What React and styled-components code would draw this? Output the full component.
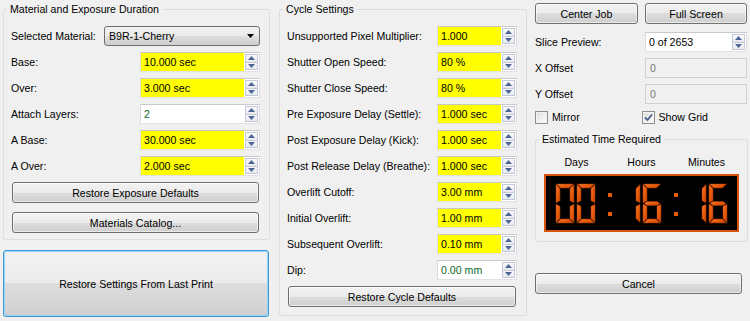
import React from 'react';
import styled, { createGlobalStyle } from 'styled-components';

const GlobalStyle = createGlobalStyle`
  html, body {
    margin: 0;
    padding: 0;
    background: #f0f0f0;
  }
  body {
    font-family: 'Liberation Sans', Arial, sans-serif;
    font-size: 10.6px;
    color: #000;
  }
`;

const Page = styled.div`
  width: 750px;
  height: 321px;
  box-sizing: border-box;
  padding: 3px 0 0 3px;
  display: flex;
  align-items: flex-start;
  background: #f0f0f0;
  overflow: hidden;
`;

const LeftColumn = styled.div`
  width: 267px;
  display: flex;
  flex-direction: column;
  gap: 10px;
  margin-right: 9px;
`;

const RightColumn = styled.div`
  width: 213px;
  margin-left: 8px;
  display: flex;
  flex-direction: column;
`;

const Group = styled.fieldset`
  margin: 0;
  min-width: 0;
  width: ${p => p.$w}px;
  box-sizing: border-box;
  padding: ${p => p.$pad};
  border: 1px solid #d5dfe5;
  border-radius: 3px;
`;

const Legend = styled.legend`
  padding: 0 3px;
  margin-left: ${p => p.$shift}px;
  line-height: 13px;
`;

const Stack = styled.div`
  display: flex;
  flex-direction: column;
  gap: 6px;
`;

const Row = styled.div`
  height: 20px;
  display: flex;
  align-items: center;
  justify-content: space-between;
`;

const Label = styled.span`
  white-space: nowrap;
`;

const Combo = styled.div`
  width: 156px;
  height: 20px;
  box-sizing: border-box;
  border: 1px solid #707070;
  border-radius: 3px;
  background: linear-gradient(#f2f2f2 0%, #ebebeb 50%, #dddddd 50%, #cfcfcf 100%);
  display: flex;
  align-items: center;
  justify-content: space-between;
  padding: 0 5px 0 4px;
`;

const SpinBox = styled.div`
  width: ${p => p.$w}px;
  height: 20px;
  box-sizing: border-box;
  display: flex;
  border: 1px solid;
  border-color: #c9c9c9 #dcdcdc #e2e2e2 #dcdcdc;
  background: #fff;
`;

const SpinValue = styled.div`
  flex: 1;
  display: flex;
  align-items: center;
  padding-left: 3px;
  background: ${p => (p.$hl ? '#ffff00' : '#ffffff')};
  color: ${p => (p.$green ? '#0d6a2a' : '#000')};
`;

const Spinner = styled.div`
  width: 15px;
  display: flex;
  flex-direction: column;
  padding: 1px;
  box-sizing: border-box;
  background: #fff;
`;

const SpinButton = styled.div`
  flex: 1;
  display: flex;
  align-items: center;
  justify-content: center;
  border: 1px solid #c2c9d8;
  background: linear-gradient(#fbfbfb, #e6e8ec);
  & + & {
    margin-top: -1px;
  }
`;

const Button = styled.div`
  height: 21px;
  width: ${p => (p.$w ? `${p.$w}px` : 'auto')};
  box-sizing: border-box;
  margin: ${p => p.$margin || '0'};
  border: 1px solid #707070;
  border-radius: 3px;
  background: linear-gradient(#f2f2f2 0%, #ebebeb 50%, #dddddd 50%, #cfcfcf 100%);
  box-shadow: inset 0 0 0 1px rgba(255, 255, 255, 0.55);
  display: flex;
  align-items: center;
  justify-content: center;
  white-space: nowrap;
`;

const BigButton = styled(Button)`
  height: 67px;
  width: 266px;
  border-color: #3c9ad8;
  box-shadow: inset 0 0 0 1px #9ad4f2;
  background: linear-gradient(#f2f2f2 0%, #ebebeb 50%, #dddddd 50%, #cfcfcf 100%);
`;

const ButtonPair = styled.div`
  display: flex;
  justify-content: space-between;
  height: 21px;
  margin-right: 1px;
`;

const FieldRow = styled.div`
  height: 20px;
  display: flex;
  align-items: center;
  justify-content: space-between;
  margin-top: ${p => p.$top}px;
  margin-right: 1px;
`;

const DisabledBox = styled.div`
  width: 102px;
  height: 20px;
  box-sizing: border-box;
  border: 1px solid #cfcfcf;
  background: #f0f0f0;
  color: #7a7a7a;
  display: flex;
  align-items: center;
  padding-left: 4px;
`;

const CheckRow = styled.div`
  height: 16px;
  margin-top: 5px;
  display: flex;
  align-items: center;
`;

const CheckItem = styled.label`
  width: 111px;
  display: flex;
  align-items: center;
  gap: 4px;
`;

const Box = styled.span`
  width: 13px;
  height: 13px;
  box-sizing: border-box;
  border: 1px solid #8f8f8f;
  background: linear-gradient(135deg, #dcdcdc, #ffffff);
  box-shadow: inset 0 0 0 1px #f3f3f3;
  display: flex;
  align-items: center;
  justify-content: center;
`;

const TimeLabels = styled.div`
  display: grid;
  grid-template-columns: repeat(3, 1fr);
  text-align: center;
  line-height: 14px;
  margin-bottom: 5px;
`;

const Display = styled.div`
  height: 58px;
  box-sizing: border-box;
  border: 2px solid #d9530a;
  background: #000;
  display: flex;
`;

const CancelButton = styled(Button)`
  width: 207px;
  margin-top: 31px;
`;

const ArrowUp = () => (
  <svg width="7" height="4" viewBox="0 0 7 4">
    <polygon points="3.5,0 7,4 0,4" fill="#4d6597" />
  </svg>
);

const ArrowDown = () => (
  <svg width="7" height="4" viewBox="0 0 7 4">
    <polygon points="0,0 7,0 3.5,4" fill="#4d6597" />
  </svg>
);

const Spin = ({ w, value, hl, green }) => (
  <SpinBox $w={w}>
    <SpinValue $hl={hl} $green={green}>{value}</SpinValue>
    <Spinner>
      <SpinButton><ArrowUp /></SpinButton>
      <SpinButton><ArrowDown /></SpinButton>
    </Spinner>
  </SpinBox>
);

const Check = ({ checked, children }) => (
  <CheckItem>
    <Box>
      {checked && (
        <svg width="9" height="9" viewBox="0 0 9 9">
          <path d="M1 4.5 L3.5 7 L8 1.5" fill="none" stroke="#4a5c8c" strokeWidth="1.8" />
        </svg>
      )}
    </Box>
    {children}
  </CheckItem>
);

// seven segment digits, drawn in the display's own pixel space
const W = 18;
const H = 39;
const T = 4;
const M = H / 2;

const SEGMENTS = {
  a: [[0.6, 0], [W - 0.6, 0], [W - T - 0.6, T], [T + 0.6, T]],
  b: [[W, 0.6], [W, M - 0.8], [W - T, M - 0.8 - T / 2], [W - T, T + 0.6]],
  c: [[W, M + 0.8], [W, H - 0.6], [W - T, H - T - 0.6], [W - T, M + 0.8 + T / 2]],
  d: [[0.6, H], [W - 0.6, H], [W - T - 0.6, H - T], [T + 0.6, H - T]],
  e: [[0, M + 0.8], [0, H - 0.6], [T, H - T - 0.6], [T, M + 0.8 + T / 2]],
  f: [[0, 0.6], [0, M - 0.8], [T, M - 0.8 - T / 2], [T, T + 0.6]],
  g: [[1, M], [T, M - T / 2], [W - T, M - T / 2], [W - 1, M], [W - T, M + T / 2], [T, M + T / 2]],
};

const DIGITS = {
  0: 'abcdef',
  1: 'bc',
  6: 'acdefg',
};

const Digit = ({ x, y, n }) => (
  <g transform={`translate(${x} ${y})`}>
    {DIGITS[n].split('').map(s => (
      <polygon
        key={s}
        points={SEGMENTS[s].map(p => p.join(',')).join(' ')}
        fill="url(#segFill)"
        stroke="#a33800"
        strokeWidth="0.5"
      />
    ))}
  </g>
);

const Colon = ({ x }) => (
  <g fill="#e85a0c">
    <rect x={x} y="17" width="4" height="4" />
    <rect x={x} y="36" width="4" height="4" />
  </g>
);

const Clock = () => (
  <svg width="190" height="54" viewBox="0 0 190 54">
    <defs>
      <linearGradient id="segFill" x1="0" y1="0" x2="1" y2="1">
        <stop offset="0" stopColor="#ff7d33" />
        <stop offset="0.5" stopColor="#e85a0c" />
        <stop offset="1" stopColor="#c44600" />
      </linearGradient>
    </defs>
    <Digit x={10} y={8} n={0} />
    <Digit x={31} y={8} n={0} />
    <Colon x={62} />
    <Digit x={76} y={8} n={1} />
    <Digit x={97} y={8} n={6} />
    <Colon x={128} />
    <Digit x={142} y={8} n={1} />
    <Digit x={163} y={8} n={6} />
  </svg>
);

const exposureRows = [
  ['Base:', '10.000 sec', true],
  ['Over:', '3.000 sec', true],
  ['Attach Layers:', '2', false],
  ['A Base:', '30.000 sec', true],
  ['A Over:', '2.000 sec', true],
];

const cycleRows = [
  ['Unsupported Pixel Multiplier:', '1.000', true],
  ['Shutter Open Speed:', '80 %', true],
  ['Shutter Close Speed:', '80 %', true],
  ['Pre Exposure Delay (Settle):', '1.000 sec', true],
  ['Post Exposure Delay (Kick):', '1.000 sec', true],
  ['Post Release Delay (Breathe):', '1.000 sec', true],
  ['Overlift Cutoff:', '3.00 mm', true],
  ['Initial Overlift:', '1.00 mm', true],
  ['Subsequent Overlift:', '0.10 mm', true],
  ['Dip:', '0.00 mm', false],
];

export default function App() {
  return (
    <Page>
      <GlobalStyle />
      <LeftColumn>
        <Group $w={267} $pad="10px 9px 6px 7px">
          <Legend $shift={-4}>Material and Exposure Duration</Legend>
          <Stack>
            <Row>
              <Label>Selected Material:</Label>
              <Combo>
                <span>B9R-1-Cherry</span>
                <svg width="7" height="4" viewBox="0 0 7 4">
                  <polygon points="0,0 7,0 3.5,4" fill="#000" />
                </svg>
              </Combo>
            </Row>
            {exposureRows.map(([label, value, hl]) => (
              <Row key={label}>
                <Label>{label}</Label>
                <Spin w={120} value={value} hl={hl} green={!hl} />
              </Row>
            ))}
            <Button $margin="0 1px">Restore Exposure Defaults</Button>
            <Button $margin="3px 1px 0">Materials Catalog...</Button>
          </Stack>
        </Group>
        <BigButton>Restore Settings From Last Print</BigButton>
      </LeftColumn>

      <Group $w={248} $pad="10px 9px 8px 7px">
        <Legend $shift={-4}>Cycle Settings</Legend>
        <Stack>
          {cycleRows.map(([label, value, hl]) => (
            <Row key={label}>
              <Label>{label}</Label>
              <Spin w={80} value={value} hl={hl} green={!hl} />
            </Row>
          ))}
          <Button $margin="0 1px">Restore Cycle Defaults</Button>
        </Stack>
      </Group>

      <RightColumn>
        <ButtonPair>
          <Button $w={103}>Center Job</Button>
          <Button $w={102}>Full Screen</Button>
        </ButtonPair>
        <FieldRow $top={8}>
          <Label>Slice Preview:</Label>
          <Spin w={102} value="0 of 2653" />
        </FieldRow>
        <FieldRow $top={6}>
          <Label>X Offset</Label>
          <DisabledBox>0</DisabledBox>
        </FieldRow>
        <FieldRow $top={6}>
          <Label>Y Offset</Label>
          <DisabledBox>0</DisabledBox>
        </FieldRow>
        <CheckRow>
          <Check>Mirror</Check>
          <Check checked>Show Grid</Check>
        </CheckRow>
        <Group $w={213} $pad="9px 8px 9px 8px" style={{ marginTop: 8 }}>
          <Legend $shift={-5}>Estimated Time Required</Legend>
          <TimeLabels>
            <span>Days</span>
            <span>Hours</span>
            <span>Minutes</span>
          </TimeLabels>
          <Display>
            <Clock />
          </Display>
        </Group>
        <CancelButton>Cancel</CancelButton>
      </RightColumn>
    </Page>
  );
}
